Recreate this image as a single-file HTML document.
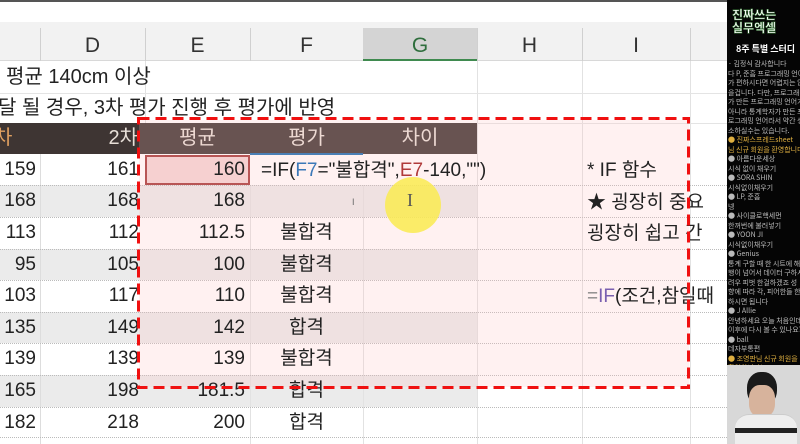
<!DOCTYPE html>
<html><head><meta charset="utf-8"><style>
*{margin:0;padding:0;box-sizing:border-box}
body{width:800px;height:444px;overflow:hidden;background:#fff;position:relative;font-family:"Liberation Sans","Noto Sans CJK KR",sans-serif;color:#222}
.a{position:absolute;white-space:nowrap}
.hl{position:absolute;left:0;width:727px;height:1px;border-top:1px dotted #bbb}
.r{position:absolute;text-align:right;font-size:19px;line-height:31px}
.c{position:absolute;text-align:center;font-size:19px;line-height:31px}
.side{position:absolute;left:727px;top:0;width:73px;height:444px;background:#050505;overflow:hidden}
.side div{font-size:7px;line-height:9.5px;color:#bbb;white-space:nowrap;font-family:"Noto Sans CJK KR",sans-serif}
</style></head><body>
<div class="a" style="left:0;top:0;width:727px;height:2px;background:#555"></div>
<div class="a" style="left:0;top:22px;width:727px;height:39px;background:#f2f2f2;border-bottom:1px solid #d8d8d8"></div>
<div class="a" style="left:363px;top:28px;width:114px;height:33px;background:#d4d4d4;border-bottom:2px solid #3f8a4f"></div>
<div class="a" style="left:40px;top:28px;width:1px;height:33px;background:#d0d0d0"></div>
<div class="a" style="left:145px;top:28px;width:1px;height:33px;background:#d0d0d0"></div>
<div class="a" style="left:250px;top:28px;width:1px;height:33px;background:#d0d0d0"></div>
<div class="a" style="left:477px;top:28px;width:1px;height:33px;background:#d0d0d0"></div>
<div class="a" style="left:582px;top:28px;width:1px;height:33px;background:#d0d0d0"></div>
<div class="a" style="left:690px;top:28px;width:1px;height:33px;background:#d0d0d0"></div>
<div class="c" style="left:40px;width:105px;top:30px;font-size:21px;color:#333">D</div>
<div class="c" style="left:145px;width:105px;top:30px;font-size:21px;color:#333">E</div>
<div class="c" style="left:250px;width:113px;top:30px;font-size:21px;color:#333">F</div>
<div class="c" style="left:363px;width:114px;top:30px;font-size:21px;color:#2f6e3d">G</div>
<div class="c" style="left:477px;width:105px;top:30px;font-size:21px;color:#333">H</div>
<div class="c" style="left:582px;width:108px;top:30px;font-size:21px;color:#333">I</div>
<div class="a" style="left:0;top:185px;width:477px;height:32px;background:#ebebeb"></div>
<div class="a" style="left:0;top:249px;width:477px;height:31px;background:#ebebeb"></div>
<div class="a" style="left:0;top:312px;width:477px;height:31px;background:#ebebeb"></div>
<div class="a" style="left:0;top:375px;width:477px;height:32px;background:#ebebeb"></div>
<div class="a" style="left:40px;top:154px;width:1px;height:290px;background:#ddd"></div>
<div class="a" style="left:145px;top:61px;width:1px;height:62px;background:#e2e2e2"></div>
<div class="a" style="left:477px;top:61px;width:1px;height:383px;background:#e2e2e2"></div>
<div class="a" style="left:582px;top:61px;width:1px;height:383px;background:#e2e2e2"></div>
<div class="a" style="left:690px;top:61px;width:1px;height:383px;background:#e2e2e2"></div>
<div class="a" style="left:250px;top:185px;width:1px;height:259px;background:#e2e2e2"></div>
<div class="a" style="left:363px;top:185px;width:1px;height:259px;background:#e2e2e2"></div>
<div class="hl" style="top:93px;border-top:1px solid #e4e4e4"></div>
<div class="hl" style="top:123px;border-top:1px solid #e4e4e4"></div>
<div class="hl" style="top:185px"></div><div class="hl" style="top:217px"></div><div class="hl" style="top:249px"></div>
<div class="hl" style="top:280px"></div><div class="hl" style="top:312px"></div><div class="hl" style="top:343px"></div>
<div class="hl" style="top:375px"></div><div class="hl" style="top:407px"></div><div class="hl" style="top:437px"></div>
<div class="a" style="left:6px;top:62px;font-size:20px;line-height:31px">평균 140cm 이상</div>
<div class="a" style="left:-2px;top:93px;font-size:20px;line-height:30px">달 될 경우, 3차 평가 진행 후 평가에 반영</div>
<div class="a" style="left:0;top:123px;width:477px;height:31px;background:#3e3533"></div>
<div class="a" style="left:-6px;top:123px;font-size:20px;line-height:31px;color:#e0a060">차</div>
<div class="r" style="left:40px;width:98px;top:123px;font-size:20px;color:#e8e0d8">2차</div>
<div class="c" style="left:145px;width:105px;top:123px;font-size:20px;color:#e8e0d8">평균</div>
<div class="c" style="left:250px;width:113px;top:123px;font-size:20px;color:#e8e0d8">평가</div>
<div class="c" style="left:363px;width:114px;top:123px;font-size:20px;color:#e8e0d8">차이</div>
<div class="a" style="left:139px;top:120px;width:550px;height:267px;background:rgba(255,190,190,0.22)"></div>
<div class="a" style="left:145px;top:155px;width:105px;height:30px;background:#f6d0d0;border:2px solid #b85555"></div>
<div class="a" style="left:250px;top:153px;width:113px;height:2px;background:#4a7fb5"></div>
<div class="r" style="left:-10px;width:46px;top:154px">159</div><div class="r" style="left:40px;width:99px;top:154px">161</div><div class="r" style="left:145px;width:100px;top:154px">160</div>
<div class="r" style="left:-10px;width:46px;top:185px">168</div><div class="r" style="left:40px;width:99px;top:185px">168</div><div class="r" style="left:145px;width:100px;top:185px">168</div>
<div class="r" style="left:-10px;width:46px;top:217px">113</div><div class="r" style="left:40px;width:99px;top:217px">112</div><div class="r" style="left:145px;width:100px;top:217px">112.5</div><div class="c" style="left:250px;width:113px;top:217px">불합격</div>
<div class="r" style="left:-10px;width:46px;top:249px">95</div><div class="r" style="left:40px;width:99px;top:249px">105</div><div class="r" style="left:145px;width:100px;top:249px">100</div><div class="c" style="left:250px;width:113px;top:249px">불합격</div>
<div class="r" style="left:-10px;width:46px;top:280px">103</div><div class="r" style="left:40px;width:99px;top:280px">117</div><div class="r" style="left:145px;width:100px;top:280px">110</div><div class="c" style="left:250px;width:113px;top:280px">불합격</div>
<div class="r" style="left:-10px;width:46px;top:312px">135</div><div class="r" style="left:40px;width:99px;top:312px">149</div><div class="r" style="left:145px;width:100px;top:312px">142</div><div class="c" style="left:250px;width:113px;top:312px">합격</div>
<div class="r" style="left:-10px;width:46px;top:343px">139</div><div class="r" style="left:40px;width:99px;top:343px">139</div><div class="r" style="left:145px;width:100px;top:343px">139</div><div class="c" style="left:250px;width:113px;top:343px">불합격</div>
<div class="r" style="left:-10px;width:46px;top:375px">165</div><div class="r" style="left:40px;width:99px;top:375px">198</div><div class="r" style="left:145px;width:100px;top:375px">181.5</div><div class="c" style="left:250px;width:113px;top:375px">합격</div>
<div class="r" style="left:-10px;width:46px;top:407px">182</div><div class="r" style="left:40px;width:99px;top:407px">218</div><div class="r" style="left:145px;width:100px;top:407px">200</div><div class="c" style="left:250px;width:113px;top:407px">합격</div>
<div class="a" style="left:261px;top:155px;font-size:19px;line-height:31px">=IF(<span style="color:#3b78b8">F7</span>="불합격",<span style="color:#b03a3a">E7</span>-140,"")</div>
<div class="a" style="left:385px;top:177px;width:56px;height:56px;border-radius:50%;background:rgba(250,235,80,0.85)"></div>
<div class="a" style="left:407px;top:190px;font-size:18px;color:#555;font-family:'Liberation Serif',serif">I</div>
<div class="a" style="left:352px;top:197px;font-size:9px;color:#666">I</div>
<div class="a" style="left:587px;top:155px;font-size:19px;line-height:31px">* IF 함수</div>
<div class="a" style="left:587px;top:187px;font-size:19px;line-height:31px">★ 굉장히 중요</div>
<div class="a" style="left:587px;top:218px;font-size:19px;line-height:31px">굉장히 쉽고 간</div>
<div class="a" style="left:587px;top:281px;font-size:19px;line-height:31px"><span style="color:#888">=</span><span style="color:#7a5fb0">IF</span>(조건,참일때</div>
<svg class="a" style="left:0;top:0" width="727" height="444"><rect x="138.5" y="118.5" width="550" height="269" fill="none" stroke="#f01010" stroke-width="3" stroke-dasharray="11 6"/></svg>
<div class="side">
<div style="position:absolute;left:5px;top:8px;font-size:12px;line-height:13px;color:#fff;font-weight:bold;-webkit-text-stroke:0.5px #3a7a3a">진짜쓰는<br>실무엑셀</div>
<div style="position:absolute;left:9px;top:44px;font-size:9px;color:#fff;font-weight:bold">8주 특별 스터디</div>
<div style="position:absolute;left:1px;top:60px">
<div>· 김정식 감사합니다</div><div>다 P, 준흠 프로그래밍 언어</div><div>가 편하시다면 어렵지는 않</div><div>을겁니다. 다만, 프로그래머</div><div>가 만든 프로그래밍 언어가</div><div>아니라 통계학자가 만든 프</div><div>로그래밍 언어라서 약간 생</div><div>소하실수는 있습니다.</div>
<div style="color:#e0b040">● 진짜스프레드sheet</div><div style="color:#e0b040">님 신규 회원을 환영합니다</div>
<div>● 아름다운세상</div><div>시식 없이 채우기</div><div>● SORA SHIN</div><div>시식없이채우기</div><div>● LP, 준흠</div><div>넹</div><div>● 사이클로핵세먼</div><div>한꺼번에 불러넣기</div><div>● YOON JI</div><div>시식없이채우기</div><div>● Genius</div><div>통계 구할 때 한 시트에 해당</div><div>행이 넘어서 데이터 구하시</div><div>려우 피벗 한걸하겠죠 성</div><div>향에 따라 각, 피어한들 한걸</div><div>하시면 됩니다</div><div>● J Allie</div><div>안녕하세요 오늘 처음인데</div><div>이후에 다시 볼 수 있나요??</div><div>● ball</div><div>데자부통편</div><div style="color:#e0b040">● 조영판님 신규 회원을</div><div style="color:#e0b040">환영합니다!</div>
</div>
<div style="position:absolute;left:0;top:365px;width:73px;height:79px;background:#d8d8d8"></div>
<div style="position:absolute;left:20px;top:372px;width:30px;height:34px;border-radius:45%;background:#1a1a1a"></div>
<div style="position:absolute;left:22px;top:385px;width:26px;height:32px;border-radius:40%;background:#d7b39c"></div>
<div style="position:absolute;left:8px;top:414px;width:62px;height:30px;border-radius:14px 14px 0 0;background:#eee;border-top:1px solid #ccc"></div>
<div style="position:absolute;left:8px;top:428px;width:62px;height:5px;background:#222"></div>
</div>
</body></html>
